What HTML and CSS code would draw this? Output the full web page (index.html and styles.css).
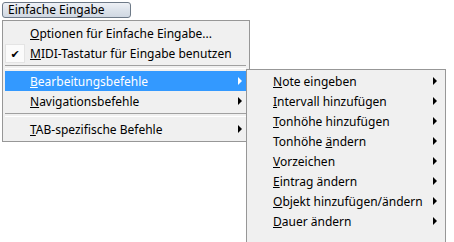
FILE: index.html
```html
<!DOCTYPE html>
<html>
<head>
<meta charset="utf-8">
<link rel="stylesheet" href="styles.css">
</head>
<body>
<div class="app">
  <div class="menubar">
    <div class="menubtn">Einfache Eingabe</div>
  </div>
  <div class="menu main">
    <div class="item"><span class="gutter"></span><span class="label"><u>O</u>ptionen für Einfache Eingabe...</span></div>
    <div class="item"><span class="gutter checked"><span class="check">✔</span></span><span class="label"><u>M</u>IDI-Tastatur für Eingabe benutzen</span></div>
    <div class="sep"></div>
    <div class="item active has-sub"><span class="gutter"></span><span class="label"><u>B</u>earbeitungsbefehle</span><span class="arrow"></span>
      <div class="menu sub">
        <div class="item"><span class="label"><u>N</u>ote eingeben</span><span class="arrow"></span></div>
        <div class="item"><span class="label"><u>I</u>ntervall hinzufügen</span><span class="arrow"></span></div>
        <div class="item"><span class="label"><u>T</u>onhöhe hinzufügen</span><span class="arrow"></span></div>
        <div class="item"><span class="label">Tonhöhe <u>ä</u>ndern</span><span class="arrow"></span></div>
        <div class="item"><span class="label"><u>V</u>orzeichen</span><span class="arrow"></span></div>
        <div class="item"><span class="label"><u>E</u>intrag ändern</span><span class="arrow"></span></div>
        <div class="item"><span class="label"><u>O</u>bjekt hinzufügen/ändern</span><span class="arrow"></span></div>
        <div class="item"><span class="label"><u>D</u>auer ändern</span><span class="arrow"></span></div>
      </div>
    </div>
    <div class="item"><span class="gutter"></span><span class="label"><u>N</u>avigationsbefehle</span><span class="arrow"></span></div>
    <div class="sep"></div>
    <div class="item"><span class="gutter"></span><span class="label"><u>T</u>AB-spezifische Befehle</span><span class="arrow"></span></div>
  </div>
</div>
</body>
</html>
```

FILE: styles.css
```css
* { box-sizing: border-box; }
html, body { margin: 0; padding: 0; background: #ffffff; }
body {
  font-family: "Noto Sans", "DejaVu Sans", sans-serif;
  font-size: 12px;
  color: #000;
}
.app {
  padding: 2px;
  width: 454px;
  height: 242px;
  overflow: hidden;
}
.menubar { display: flex; }
.menubtn {
  width: 129px;
  height: 16px;
  line-height: 13px;
  padding-left: 5px;
  border: 1px solid #6e7a88;
  border-radius: 3px;
  background: linear-gradient(#eef1f6, #dde3eb 50%, #d0d8e2);
  color: #000;
}
.menu {
  background: #f0f0f0;
  border: 1px solid #979797;
  padding: 2px;
}
.main {
  width: 248px;
  margin-top: 2px;
  position: relative;
}
.item {
  height: 20px;
  display: flex;
  align-items: center;
  position: relative;
  white-space: nowrap;
}
.item u { text-decoration: underline; text-underline-offset: 1px; }
.gutter {
  width: 20px;
  height: 19px;
  margin-right: 5px;
  flex: none;
  display: flex;
  align-items: center;
  justify-content: center;
}
.gutter.checked {
  background: #fbfbfb;
  border: 1px solid #e4e4e4;
}
.check { font-size: 11px; line-height: 1; }
.label { flex: 1; }
.arrow {
  width: 0;
  height: 0;
  border-top: 4px solid transparent;
  border-bottom: 4px solid transparent;
  border-left: 4px solid #000;
  margin-right: 5px;
}
.item.active { background: #3399ff; color: #fff; }
.item.active > .arrow { border-left-color: #fff; }
.sep {
  height: 8px;
  margin: 0 1px 0 0;
  display: flex;
  align-items: center;
}
.sep::before {
  content: "";
  display: block;
  width: 100%;
  height: 2px;
  border-top: 1px solid #a0a0a0;
  border-bottom: 1px solid #ffffff;
}
.sub {
  position: absolute;
  left: 241px;
  top: -2px;
  width: 200px;
  height: 200px;
  color: #000;
  padding-top: 1px;
}
.sub .item { padding-left: 24px; }
.sub .arrow { margin-right: 6px; }
```
